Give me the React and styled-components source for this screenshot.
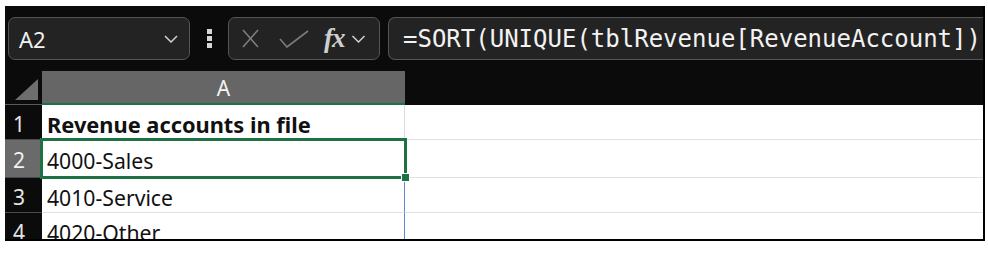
import React from "react";
import styled, { createGlobalStyle } from "styled-components";

const GlobalStyle = createGlobalStyle`
  html, body { margin: 0; padding: 0; background: #ffffff; }
  * { box-sizing: border-box; }
`;

const Screen = styled.div`
  margin: 6px 0 0 5px;
  width: 980px;
  height: 235px;
  background: #0b0b0b;
  overflow: hidden;
  display: flex;
  flex-direction: column;
  border-bottom: 2px solid #000;
  border-right: 2px solid #000;
`;

const Toolbar = styled.div`
  height: 65px;
  flex: none;
  display: flex;
  align-items: center;
  padding-left: 3px;
`;

const Box = styled.div`
  height: 43px;
  flex: none;
  display: flex;
  align-items: center;
  background: #232323;
  border: 1px solid #555555;
  border-radius: 7px;
`;

const NameBox = styled(Box)`
  width: 182px;
  padding: 0 11px 0 10px;
  justify-content: space-between;
`;

const NameText = styled.span`
  font-family: "Noto Sans", Roboto, sans-serif;
  font-size: 22px;
  color: #f2f2f2;
  line-height: 1;
`;

const Dots = styled.div`
  display: flex;
  flex-direction: column;
  gap: 2px;
  margin: 0 16px 0 17px;
`;

const Dot = styled.span`
  width: 5px;
  height: 5px;
  background: #d6d6d6;
`;

const FxBox = styled(Box)`
  width: 152px;
  padding: 0 0 0 13px;
`;

const IconGap = styled.span`
  width: ${(p) => p.$w}px;
  flex: none;
`;

const FxText = styled.span`
  font-family: "Liberation Serif", "DejaVu Serif", serif;
  font-style: italic;
  font-weight: bold;
  font-size: 27px;
  color: #cfcfcf;
  line-height: 1;
  margin: 0 6px 0 15px;
  letter-spacing: -1px;
`;

const FormulaBox = styled(Box)`
  flex: 1;
  margin-left: 8px;
  padding-left: 14px;
  border-right: none;
  border-top-right-radius: 0;
  border-bottom-right-radius: 0;
`;

const FormulaText = styled.span`
  font-family: "DejaVu Sans Mono", "Liberation Mono", monospace;
  font-size: 24px;
  color: #f2f2f2;
  white-space: nowrap;
  line-height: 1;
`;

const Grid = styled.div`
  flex: 1;
  display: flex;
  flex-direction: column;
  min-height: 0;
`;

const Row = styled.div`
  display: flex;
  height: ${(p) => p.$h}px;
  flex: none;
  position: relative;
  z-index: ${(p) => (p.$top ? 2 : 1)};
`;

const Corner = styled.div`
  width: 37px;
  flex: none;
  display: flex;
  align-items: flex-end;
  justify-content: flex-end;
  padding: 0 4px 4px 0;
  border-bottom: 1px solid #5a5a5a;
`;

const ColHeader = styled.div`
  width: 363px;
  flex: none;
  background: #666666;
  border-bottom: 2px solid #1e7145;
  display: flex;
  align-items: center;
  justify-content: center;
  font-family: "Noto Sans", Roboto, sans-serif;
  font-size: 21px;
  color: #f4f4f4;
  padding-top: 2px;
`;

const HeaderRest = styled.div`
  flex: 1;
  background: #0b0b0b;
`;

const RowHeader = styled.div`
  width: 37px;
  flex: none;
  display: flex;
  align-items: center;
  padding-left: 8px;
  font-family: "Noto Sans", Roboto, sans-serif;
  font-size: 21px;
  color: ${(p) => (p.$active ? "#f2f2f2" : "#e4e4e4")};
  background: ${(p) => (p.$active ? "#6a6a6a" : "#0b0b0b")};
  border-bottom: 1px solid #4a4a4a;
  padding-top: 3px;
`;

const Cell = styled.div`
  position: relative;
  width: 363px;
  flex: none;
  background: #ffffff;
  border-bottom: 1px solid #e1e1e1;
  border-right: 1px solid ${(p) => (p.$blue ? "#5b87d3" : "#dcdcdc")};
  display: flex;
  align-items: center;
  padding: 4px 0 0 5px;
  font-family: "Noto Sans", Roboto, sans-serif;
  font-size: ${(p) => (p.$bold ? 21.8 : 21.2)}px;
  font-weight: ${(p) => (p.$bold ? 700 : 400)};
  color: #111111;
  white-space: nowrap;
`;

const CellRest = styled.div`
  flex: 1;
  background: #ffffff;
  border-bottom: 1px solid #e1e1e1;
`;

const Selection = styled.div`
  position: absolute;
  z-index: 3;
  top: -2px;
  left: -2px;
  right: -3px;
  bottom: -2px;
  border: 3px solid #1e7145;
  pointer-events: none;
`;

const Handle = styled.div`
  position: absolute;
  right: -6px;
  bottom: -6px;
  width: 9px;
  height: 9px;
  background: #1e7145;
  border: 1px solid #ffffff;
`;

const Chevron = ({ w = 14, h = 8 }) => (
  <svg width={w} height={h} viewBox="0 0 14 8">
    <polyline points="1,1 7,7 13,1" fill="none" stroke="#d0d0d0" strokeWidth="1.5" />
  </svg>
);

const CrossIcon = () => (
  <svg width="17" height="19" viewBox="0 0 17 19">
    <line x1="1" y1="1" x2="16" y2="18" stroke="#7c7c7c" strokeWidth="1.6" />
    <line x1="16" y1="1" x2="1" y2="18" stroke="#7c7c7c" strokeWidth="1.6" />
  </svg>
);

const CheckIcon = () => (
  <svg width="30" height="18" viewBox="0 0 30 18">
    <polyline points="1,9 8,17 29,1" fill="none" stroke="#7c7c7c" strokeWidth="1.6" />
  </svg>
);

const CornerTriangle = () => (
  <svg width="23" height="21" viewBox="0 0 23 21">
    <polygon points="0,21 23,21 23,0" fill="#6e6e6e" />
  </svg>
);

const rows = [
  { n: 1, text: "Revenue accounts in file", bold: true, h: 35 },
  { n: 2, text: "4000-Sales", active: true, h: 38 },
  { n: 3, text: "4010-Service", blue: true, h: 35 },
  { n: 4, text: "4020-Other", blue: true, h: 35 },
];

export default function App() {
  return (
    <>
      <GlobalStyle />
      <Screen>
        <Toolbar>
          <NameBox>
            <NameText>A2</NameText>
            <Chevron />
          </NameBox>
          <Dots>
            <Dot />
            <Dot />
            <Dot />
          </Dots>
          <FxBox>
            <CrossIcon />
            <IconGap $w={20} />
            <CheckIcon />
            <FxText>fx</FxText>
            <Chevron w={15} h={8} />
          </FxBox>
          <FormulaBox>
            <FormulaText>=SORT(UNIQUE(tblRevenue[RevenueAccount])</FormulaText>
          </FormulaBox>
        </Toolbar>
        <Grid>
          <Row $h={34}>
            <Corner>
              <CornerTriangle />
            </Corner>
            <ColHeader>A</ColHeader>
            <HeaderRest />
          </Row>
          {rows.map((r) => (
            <Row key={r.n} $h={r.h} $top={r.active}>
              <RowHeader $active={r.active}>{r.n}</RowHeader>
              <Cell $bold={r.bold} $blue={r.blue}>
                {r.text}
                {r.active && (
                  <Selection>
                    <Handle />
                  </Selection>
                )}
              </Cell>
              <CellRest />
            </Row>
          ))}
        </Grid>
      </Screen>
    </>
  );
}
